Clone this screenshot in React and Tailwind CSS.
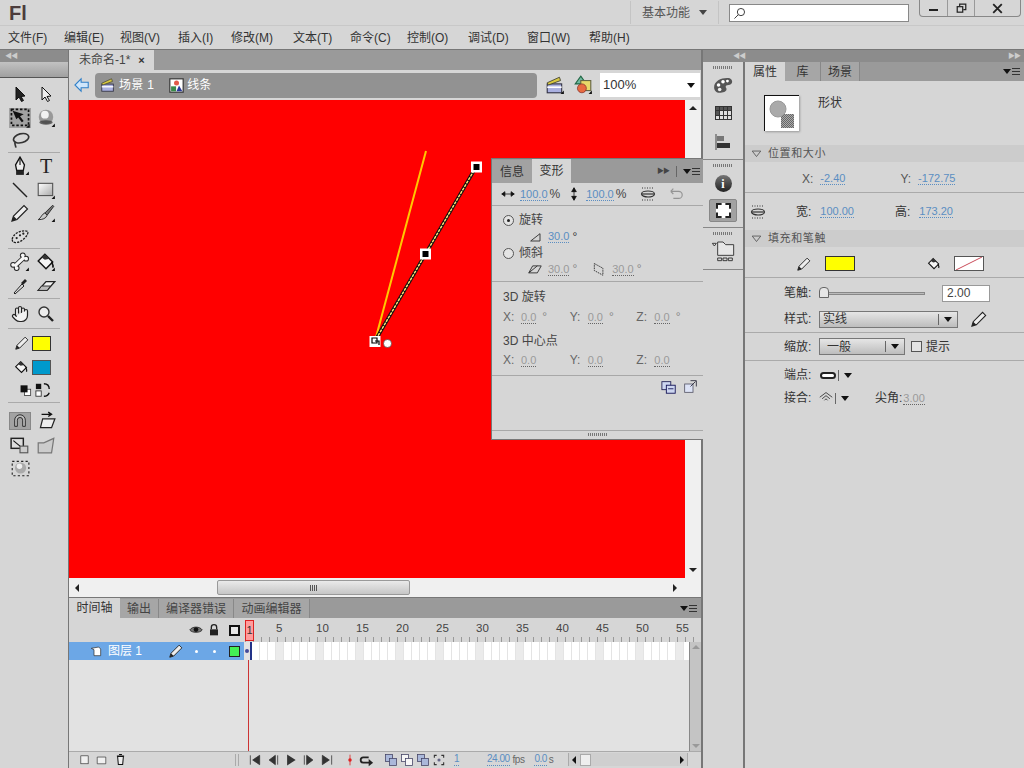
import { Hand } from "lucide-react";

const menus = [
  ["文件(F)", "w-[39px]"],
  ["编辑(E)", "w-[39px]"],
  ["视图(V)", "w-[41px]"],
  ["插入(I)", "w-[36px]"],
  ["修改(M)", "w-[45px]"],
  ["文本(T)", "w-[40px]"],
  ["命令(C)", "w-[40px]"],
  ["控制(O)", "w-[44px]"],
  ["调试(D)", "w-[42px]"],
  ["窗口(W)", "w-[45px]"],
  ["帮助(H)", "w-[42px]"],
];
const frames = Array.from({ length: 55 }, (_, i) => i + 1);
const labels = [5, 10, 15, 20, 25, 30, 35, 40, 45, 50, 55];

function Ico({ children, size = 18, className = "" }) {
  return (
    <svg viewBox="0 0 18 18" width={size} height={size} className={"shrink-0 " + className}>
      {children}
    </svg>
  );
}

function Corner() {
  return <path d="M17 14v3h-3z" fill="#111" />;
}

const Arrow = ({ white }) => (
  <Ico>
    <path d="M5 2v13l3-3 2.5 4.5 2-1L10 11.5l4-.5z" fill={white ? "#eee" : "#222"} stroke="#111" strokeWidth="1" />
  </Ico>
);
const FreeTransform = () => (
  <Ico size={22}>
    <rect x="2" y="2" width="14" height="13" fill="none" stroke="#111" strokeWidth="1.4" strokeDasharray="2 1.5" />
    <path d="M3 3l9 3-3 1.5 3 4-1.5 1-3-4L6 10z" fill="#111" />
    <Corner />
  </Ico>
);
const Ball = () => (
  <Ico size={20}>
    <circle cx="9" cy="8" r="6.5" fill="#999" />
    <circle cx="8" cy="6" r="3.5" fill="#f2f2f2" />
    <ellipse cx="9" cy="13" rx="6" ry="2" fill="#333" opacity=".7" />
    <Corner />
  </Ico>
);
const Lasso = () => (
  <Ico size={20}>
    <ellipse cx="10" cy="6.5" rx="7" ry="4" transform="rotate(-15 10 6.5)" fill="none" stroke="#333" strokeWidth="1.5" />
    <path d="M5 10c-2 2 1 3 0 5" fill="none" stroke="#333" strokeWidth="1.5" />
  </Ico>
);
const Pen = () => (
  <Ico size={20}>
    <path d="M9 1l4 7-1 5H6L5 8z" fill="#eee" stroke="#111" strokeWidth="1.2" />
    <path d="M9 2v6" stroke="#111" />
    <rect x="5.5" y="13" width="7" height="4" fill="#222" />
    <Corner />
  </Ico>
);
const LineTool = () => (
  <Ico>
    <path d="M2 2l14 14" stroke="#222" strokeWidth="1.4" />
  </Ico>
);
const RectTool = () => (
  <Ico size={20}>
    <defs>
      <linearGradient id="rectg" x1="0" y1="0" x2="1" y2="1">
        <stop offset="0" stopColor="#fff" />
        <stop offset="1" stopColor="#aaa" />
      </linearGradient>
    </defs>
    <rect x="2" y="3" width="13" height="11" fill="url(#rectg)" stroke="#555" />
    <Corner />
  </Ico>
);
const Pencil = ({ size = 18 }) => (
  <Ico size={size}>
    <path d="M1 17l1.5-5L13 1.5 16.5 5 6 15.5z" fill="#eee" stroke="#222" strokeWidth="1.2" />
    <path d="M1 17l1.5-5L6 15.5z" fill="#222" />
  </Ico>
);
const Brush = () => (
  <Ico size={20}>
    <path d="M15 2L8 9l2 2 6-8z" fill="#777" stroke="#222" strokeWidth=".8" />
    <path d="M8 9c-3 1-3 4-6 6 4 0 7-1 8-4z" fill="#ccc" stroke="#222" strokeWidth=".8" />
    <Corner />
  </Ico>
);
const Deco = () => (
  <Ico size={20}>
    <path d="M2 11c1-5 8-9 14-7 1 3-5 10-11 10-2 0-3-1-3-3z" fill="#ddd" stroke="#222" strokeWidth="1.2" strokeDasharray="2 1" />
    <circle cx="6" cy="10" r="1" fill="#222" />
    <circle cx="9" cy="7.5" r="1" fill="#222" />
    <circle cx="12" cy="6" r="1" fill="#222" />
  </Ico>
);
const Bone = () => (
  <Ico size={20}>
    <g fill="#222">
      <circle cx="11.5" cy="3" r="2.6" />
      <circle cx="14.5" cy="6" r="2.6" />
      <circle cx="2.8" cy="11.5" r="2.6" />
      <circle cx="6" cy="14.5" r="2.6" />
    </g>
    <path d="M4 13L13 4.5" stroke="#222" strokeWidth="4.4" />
    <g fill="#f6f6f6">
      <circle cx="11.5" cy="3" r="1.7" />
      <circle cx="14.5" cy="6" r="1.7" />
      <circle cx="2.8" cy="11.5" r="1.7" />
      <circle cx="6" cy="14.5" r="1.7" />
    </g>
    <path d="M4 13L13 4.5" stroke="#f6f6f6" strokeWidth="2.8" />
    <Corner />
  </Ico>
);
const Bucket = ({ size = 20, corner = true }) => (
  <Ico size={size}>
    <path d="M8 2l7 7-6 6-7-7z" fill="#f4f4f4" stroke="#111" strokeWidth="1.3" />
    <path d="M5 5l3-3 4 4-4 1z" fill="#333" />
    <path d="M14 9c1 2 2 3 1 5" fill="none" stroke="#111" strokeWidth="1.5" />
    {corner && <Corner />}
  </Ico>
);
const Dropper = () => (
  <Ico>
    <path d="M3 16l8-9 2 2-9 8z" fill="#ddd" stroke="#222" />
    <path d="M10 6l4-4 2 2-4 4z" fill="#222" />
  </Ico>
);
const Eraser = () => (
  <Ico size={20}>
    <path d="M2 13l7-8h8l-7 8z" fill="#f2f2f2" stroke="#222" strokeWidth="1.2" />
    <path d="M2 13l3-4h8l-3 4z" fill="#bbb" stroke="#222" strokeWidth=".8" />
  </Ico>
);
const Zoom = () => (
  <Ico>
    <circle cx="7" cy="7" r="5" fill="#ececec" stroke="#333" strokeWidth="1.4" />
    <path d="M11 11l5 5" stroke="#222" strokeWidth="2.4" />
  </Ico>
);
const Magnet = () => (
  <div className="w-[22px] h-[18px] bg-[#a2a2a2] border border-[#888] flex items-center justify-center">
    <Ico size={16}>
      <path d="M3 15V8a6 6 0 0112 0v7h-3V8a3 3 0 00-6 0v7z" fill="#bbb" stroke="#222" strokeWidth="1" />
    </Ico>
  </div>
);
const Rotate3d = () => (
  <Ico size={20}>
    <path d="M4 15l2-8h11l-3 8z" fill="#eee" stroke="#222" strokeWidth="1.1" />
    <path d="M5 3h9M11 1l3 2-3 2" fill="none" stroke="#111" strokeWidth="1.2" />
  </Ico>
);
const ScaleBox = () => (
  <Ico size={20}>
    <rect x="1" y="3" width="11" height="9" fill="#ddd" stroke="#222" strokeWidth="1.3" />
    <rect x="9" y="10" width="7" height="6" fill="#ccc" stroke="#555" />
    <path d="M3 5l6 5" stroke="#111" />
  </Ico>
);
const Distort = () => (
  <Ico size={20}>
    <path d="M2 7h5l9-4-2 13H2z" fill="#ccc" stroke="#777" strokeWidth="1.1" />
  </Ico>
);
const Envelope = () => (
  <Ico size={20}>
    <rect x="2" y="3" width="15" height="13" fill="none" stroke="#222" strokeDasharray="2 2" />
    <circle cx="9.5" cy="9" r="5" fill="#aaa" />
    <circle cx="8.5" cy="7.5" r="2.5" fill="#eee" />
  </Ico>
);
const BlackWhite = () => (
  <Ico size={14}>
    <rect x="7" y="8" width="8" height="8" fill="#fff" stroke="#333" />
    <rect x="2" y="3" width="9" height="9" fill="#111" />
  </Ico>
);
const Swap = () => (
  <Ico size={16}>
    <rect x="1" y="2" width="6" height="6" fill="#111" />
    <rect x="1" y="10" width="6" height="6" fill="#fff" stroke="#333" />
    <path d="M10 2c4 0 6 2 6 6M10 16c3 0 5-1 6-4" fill="none" stroke="#111" strokeWidth="1.5" />
  </Ico>
);
const LinkIcon = () => (
  <Ico>
    <ellipse cx="9" cy="9" rx="6.5" ry="3" fill="none" stroke="#333" strokeWidth="1.2" />
    <path d="M3 9h12" stroke="#333" strokeWidth="1.2" />
    <path d="M3 3h12M3 15h12" stroke="#333" strokeDasharray="1 1.5" />
  </Ico>
);
const Clapper = ({ size = 20, corner }) => (
  <Ico size={size}>
    <rect x="2" y="8" width="13" height="8" fill="#aab0e0" stroke="#334" />
    <path d="M2 11h13" stroke="#fff" strokeWidth="1.5" />
    <path d="M2 7l11-5 1 3L3 9z" fill="#d8c840" stroke="#443" strokeWidth=".8" />
    {corner && <Corner />}
  </Ico>
);
const Symbols = () => (
  <Ico size={20}>
    <path d="M7 1l5 7H2z" fill="#6fb9a0" stroke="#264" />
    <rect x="7" y="5" width="9" height="9" fill="#e8d868" stroke="#664" />
    <circle cx="8" cy="12" r="4" fill="#e86a40" stroke="#722" strokeWidth=".6" />
    <Corner />
  </Ico>
);
const ShapeBadge = () => (
  <Ico size={15}>
    <rect x="1" y="1" width="16" height="16" fill="#fff" stroke="#333" strokeWidth="1.4" />
    <circle cx="9" cy="6" r="3" fill="#e25a4a" />
    <rect x="2.5" y="10" width="6" height="6" fill="#3b8a4a" />
    <path d="M12 9l4 7H9z" fill="#2a3a9a" />
  </Ico>
);
const BackArrow = () => (
  <Ico size={16}>
    <path d="M8 2v4h8v6H8v4L1 9z" fill="#cfe6fb" stroke="#2f7fc8" strokeWidth="1.2" />
  </Ico>
);

function Caret({ className = "" }) {
  return <span className={"inline-block w-0 h-0 border-l-[4px] border-r-[4px] border-t-[5px] border-l-transparent border-r-transparent border-t-[#111] " + className} />;
}

function Grip({ className = "" }) {
  return <div className={"w-[20px] h-[3px] bg-[repeating-linear-gradient(90deg,#777_0,#777_1px,transparent_1px,transparent_2px)] " + className} />;
}

function ToolRow({ children }) {
  return <div className="grid grid-cols-[26px_26px] -ml-[1px] auto-rows-[23.7px] items-center justify-items-center">{children}</div>;
}

function Tools() {
  return (
    <div className="flex-1 flex flex-col bg-[#d6d6d6]">
      <div className="h-[75px] pt-[4px] border-b border-[#aaa] mx-[8px]">
        <ToolRow>
          <Arrow />
          <Arrow white />
          <div className="bg-[#a2a2a2] w-[22px] h-[20px] flex items-center justify-center"><FreeTransform /></div>
          <Ball />
          <Lasso />
        </ToolRow>
      </div>
      <div className="h-[96px] pt-[1px] border-b border-[#aaa] mx-[8px]">
        <ToolRow>
          <Pen />
          <span className="text-[20px] leading-none text-[#222] [font-family:'Liberation_Serif',serif]">T</span>
          <LineTool />
          <RectTool />
          <Pencil />
          <Brush />
          <Deco />
        </ToolRow>
      </div>
      <div className="h-[50px] pt-[1px] border-b border-[#aaa] mx-[8px]">
        <ToolRow>
          <Bone />
          <Bucket />
          <Dropper />
          <Eraser />
        </ToolRow>
      </div>
      <div className="h-[30px] pt-[3px] border-b border-[#aaa] mx-[8px]">
        <ToolRow>
          <Hand size={18} fill="#f2f2f2" color="#222" strokeWidth={1.6} />
          <Zoom />
        </ToolRow>
      </div>
      <div className="h-[74px] pt-[2px] border-b border-[#aaa] mx-[8px]">
        <div className="flex items-center h-[24px] pl-[7px] gap-[3px]">
          <Pencil size={14} />
          <div className="w-[19px] h-[15px] bg-[#ffff00] border border-[#333]" />
        </div>
        <div className="flex items-center h-[24px] pl-[6px] gap-[3px]">
          <Bucket size={15} corner={false} />
          <div className="w-[19px] h-[15px] bg-[#0099cc] border border-[#555]" />
        </div>
        <div className="flex items-center h-[22px] pl-[11px] gap-[2px]">
          <BlackWhite />
          <Swap />
        </div>
      </div>
      <div className="pt-[6px] mx-[8px]">
        <ToolRow>
          <Magnet />
          <Rotate3d />
          <ScaleBox />
          <Distort />
          <Envelope />
        </ToolRow>
      </div>
    </div>
  );
}

function Val({ children, blue, className = "" }) {
  return (
    <span className={"text-[11px] border-b border-dotted leading-[12px] " + (blue ? "text-[#5b8ec2] border-[#5b8ec2] " : "text-[#9a9a9a] border-[#666] ") + className}>
      {children}
    </span>
  );
}

function Radio({ on }) {
  return (
    <span className="w-[11px] h-[11px] rounded-full border border-[#555] bg-[#e4e4e4] flex items-center justify-center shrink-0">
      {on && <span className="w-[3px] h-[3px] rounded-full bg-[#222]" />}
    </span>
  );
}

function Xyz({ suffix }) {
  return (
    <div className="flex text-[#666] h-[14px] items-center">
      {["X:", "Y:", "Z:"].map((a) => (
        <div key={a} className="w-[67px] flex gap-[6px] items-center">
          <span className="w-[12px]">{a}</span>
          <Val>0.0</Val>
          <span className="text-[#888]">{suffix}</span>
        </div>
      ))}
    </div>
  );
}

function TransformPanel() {
  return (
    <div className="absolute left-[422px] top-[108px] w-[212px] h-[282px] bg-[#d6d6d6] border border-[#777] border-r-0 flex flex-col text-[12px] text-[#444]">
      <div className="h-[24px] bg-[#9a9a9a] flex items-end">
        <div className="w-[40px] h-[23px] flex items-center justify-center bg-[#a2a2a2] text-[#333]">信息</div>
        <div className="w-[39px] h-[24px] flex items-center justify-center bg-[#d6d6d6] text-[#333]">变形</div>
        <div className="flex-1 h-[24px] flex items-center justify-end gap-[6px] pr-[3px] text-[#333]">
          <span className="text-[7px] tracking-[-1px] text-[#444] mr-[1px]">▶▶</span>
          <span className="w-px h-[11px] bg-[#666]" />
          <MenuGlyph />
        </div>
      </div>
      <div className="h-[23px] flex items-center border-b border-[#a8a8a8] pl-[9px]">
        <Ico size={14}><path d="M1 9h16M1 9l4-3v6zM17 9l-4-3v6z" stroke="#111" fill="#111" /></Ico>
        <Val blue className="ml-[5px]">100.0</Val>
        <span className="ml-[2px]">%</span>
        <Ico size={14} className="ml-[7px]"><path d="M9 1v16M9 1L6 6h6zM9 17l-3-5h6z" stroke="#111" fill="#111" /></Ico>
        <Val blue className="ml-[5px]">100.0</Val>
        <span className="ml-[2px]">%</span>
        <span className="ml-[13px]"><LinkIcon /></span>
        <Ico size={16} className="ml-[11px] opacity-50"><path d="M3 6h9a3 3 0 010 8H6M3 6l3-3M3 6l3 3" fill="none" stroke="#555" strokeWidth="1.3" /></Ico>
      </div>
      <div className="h-[76px] border-b border-[#a8a8a8] pl-[11px] pt-[6px]">
        <div className="flex items-center gap-[5px] h-[16px]"><Radio on /><span>旋转</span></div>
        <div className="flex items-center h-[17px] pl-[27px] gap-[6px]">
          <Ico size={12}><path d="M1 15L15 4v11z" fill="none" stroke="#333" strokeWidth="1.4" /></Ico>
          <Val blue>30.0</Val><span className="-ml-[3px] text-[#333]">°</span>
        </div>
        <div className="flex items-center gap-[5px] h-[16px]"><Radio /><span>倾斜</span></div>
        <div className="flex items-center h-[16px] pl-[25px] gap-[6px] text-[#888]">
          <Ico size={14}><path d="M1 14l5-9h11l-5 9zM1 14l11-9" fill="none" stroke="#333" strokeWidth="1.2" /></Ico>
          <Val>30.0</Val><span className="-ml-[3px]">°</span>
          <Ico size={14} className="ml-[9px]"><path d="M3 2l11 6v9L3 11z" fill="none" stroke="#333" strokeWidth="1.2" strokeDasharray="2 1" /></Ico>
          <Val>30.0</Val><span className="-ml-[3px]">°</span>
        </div>
      </div>
      <div className="h-[94px] border-b border-[#a8a8a8] pl-[11px] pt-[7px]">
        <div className="h-[16px] flex items-center">3D 旋转</div>
        <div className="mt-[5px]"><Xyz suffix="°" /></div>
        <div className="mt-[9px] h-[16px] flex items-center">3D 中心点</div>
        <div className="mt-[4px]"><Xyz suffix="" /></div>
      </div>
      <div className="flex-1 flex flex-col">
        <div className="flex justify-end gap-[6px] pr-[5px] pt-[3px]">
          <Ico size={16}><rect x="1" y="3" width="10" height="9" fill="#cdd6f0" stroke="#225" /><rect x="6" y="7" width="10" height="9" fill="#cdd6f0" stroke="#115" /><path d="M8 11h6" stroke="#115" /></Ico>
          <Ico size={15}><rect x="2" y="6" width="10" height="10" fill="#dde3f6" stroke="#556" /><path d="M9 2h7v7M15 3l-6 6" fill="none" stroke="#223" /></Ico>
        </div>
        <div className="mt-auto h-[8px] mb-[1px] border-t border-[#a8a8a8] flex justify-center items-center">
          <Grip />
        </div>
      </div>
    </div>
  );
}

function MenuGlyph() {
  return (
    <span className="flex items-center gap-[1px]">
      <Caret className="border-l-[3px] border-r-[3px] border-t-[3px]" />
      <span className="w-[8px] h-[7px] bg-[repeating-linear-gradient(180deg,#333_0,#333_1px,transparent_1px,transparent_3px)]" />
    </span>
  );
}

function Canvas() {
  return (
    <div className="w-[616px] h-[478px] bg-[#ff0000]">
      <svg viewBox="0 0 616 478" className="w-full h-full block">
        <path d="M357 51L306 241" stroke="#ffc800" strokeWidth="2" />
        <path d="M407 67L306 241" stroke="#111" strokeWidth="3.5" />
        <path d="M407 67L306 241" stroke="#ffe97a" strokeWidth="1.4" strokeDasharray="3 1" />
        <rect x="402" y="61.5" width="11" height="11" fill="#fff" />
        <rect x="404.5" y="64" width="6" height="6" fill="#000" />
        <rect x="351" y="148.5" width="11" height="11" fill="#fff" />
        <rect x="353.5" y="151" width="6" height="6" fill="#000" />
        <rect x="300.5" y="236" width="11" height="11" fill="#fff" />
        <path d="M303 238h5v5h-5zM306 241h4v4" fill="none" stroke="#000" strokeWidth="1.2" />
        <circle cx="318.5" cy="243.5" r="4" fill="#fff" stroke="#333" strokeWidth=".6" />
      </svg>
    </div>
  );
}

function Timeline() {
  return (
    <div className="h-[170px] flex flex-col border-t border-[#777] text-[12px]">
      <div className="h-[20px] bg-[#9a9a9a] flex items-end text-[#444]">
        <div className="w-[51px] h-[20px] bg-[#d6d6d6] flex items-center justify-center text-[#333]">时间轴</div>
        <div className="w-[39px] h-[19px] bg-[#a6a6a6] border-r border-[#888] flex items-center justify-center">输出</div>
        <div className="w-[75px] h-[19px] bg-[#a6a6a6] border-r border-[#888] flex items-center justify-center">编译器错误</div>
        <div className="w-[76px] h-[19px] bg-[#a6a6a6] border-r border-[#888] flex items-center justify-center">动画编辑器</div>
        <div className="ml-auto h-[19px] pr-[4px] flex items-center"><MenuGlyph /></div>
      </div>
      <div className="h-[24px] flex bg-[#d6d6d6]">
        <div className="w-[176px] shrink-0 flex items-center justify-end pr-[5px]">
          <Ico size={14}><path d="M1 9c3-5 13-5 16 0-3 4-13 4-16 0z" fill="#777" stroke="#222" /><circle cx="9" cy="8.5" r="3" fill="#111" /></Ico>
          <Ico size={12} className="ml-[5px]"><path d="M5 8V5a4 4 0 018 0v3" fill="none" stroke="#222" strokeWidth="2" /><rect x="3" y="8" width="12" height="9" fill="#222" /></Ico>
          <span className="ml-[9px] w-[11px] h-[11px] border-2 border-[#111] bg-[#e8e8e8]" />
        </div>
        <div className="flex-1 min-w-0 overflow-hidden flex flex-col justify-end relative">
          <div className="absolute left-0 top-[2px] w-[9px] h-[21px] bg-[#ff9c9c] border border-[#dd2222] flex items-center justify-center text-[11px] leading-none text-[#333]">1</div>
          <div className="flex h-[16px] pl-[31px] text-[#444] text-[11.5px] leading-[14px]">
            {labels.map((n) => (
              <span key={n} className="w-[40px] shrink-0">{n}</span>
            ))}
          </div>
          <div className="h-[5px] bg-[repeating-linear-gradient(90deg,#999_0,#999_1px,transparent_1px,transparent_8px)]" />
        </div>
      </div>
      <div className="h-[18px] flex bg-[#e2e2e2]">
        <div className="w-[175px] shrink-0 bg-[#6ca7e6] flex items-center pl-[21px] text-white">
          <Ico size={12}><path d="M2 5l11-2 3 3v10H6V7z" fill="#fff" stroke="#222" /></Ico>
          <span className="ml-[6px] w-[61px]">图层 1</span>
          <Pencil size={14} />
          <span className="ml-[12px] w-[3px] h-[3px] rounded-full bg-white" />
          <span className="ml-[15px] w-[3px] h-[3px] rounded-full bg-white" />
          <span className="ml-[13px] w-[11px] h-[11px] bg-[#44f055] border border-[#222]" />
        </div>
        <div className="w-[8px] shrink-0 bg-[#e2e2e2] border-r-2 border-[#223388] flex items-center justify-center">
          <span className="w-[4px] h-[4px] rounded-full bg-[#444a99]" />
        </div>
        <div className="flex-1 min-w-0 flex overflow-hidden">
          {frames.map((f) => (
            <div key={f} className={"w-[8px] h-full shrink-0 border-r border-[#e4e4e4] " + (f % 5 === 4 ? "bg-[#ebebeb]" : "bg-white")} />
          ))}
        </div>
        <div className="w-[12px] shrink-0 bg-[#c4c4c4] border-l border-[#888] flex justify-center pt-[3px]">
          <span className="w-0 h-0 border-x-[4px] border-b-[4px] border-x-transparent border-b-[#999]" />
        </div>
      </div>
      <div className="flex-1 flex bg-[#e2e2e2]">
        <div className="w-[175px] shrink-0" />
        <div className="w-px bg-[#cc3333] ml-[4px]" />
        <div className="flex-1" />
        <div className="w-[12px] shrink-0 bg-[#c4c4c4] border-l border-[#888] flex justify-center items-end pb-[3px]">
          <span className="w-0 h-0 border-x-[4px] border-t-[4px] border-x-transparent border-t-[#999]" />
        </div>
      </div>
      <div className="h-[16px] bg-[#d6d6d6] flex items-center text-[#666] text-[10px] tracking-[-0.5px] border-t border-[#aaa]">
        <div className="w-[38px] pl-[10px] flex gap-[6px] shrink-0">
          <Ico size={11}><rect x="3" y="3" width="12" height="13" fill="#f0f0f0" stroke="#222" /></Ico>
          <Ico size={11}><path d="M2 5h14v11H2z" fill="#f0f0f0" stroke="#222" /></Ico>
        </div>
        <Ico size={13} className="ml-[7px]"><path d="M5 5h8l-1 11H6zM4 4h10M7 2h4" fill="#eee" stroke="#111" strokeWidth="1.4" /></Ico>
        <span className="ml-[108px] w-[4px] h-[12px] border-x border-[#aaa]" />
        <div className="ml-[9px] flex items-center text-[#333] gap-[4px]">
          <Ico size={14}><path d="M3 3v12M15 3L6 9l9 6z" fill="#333" stroke="#333" /></Ico>
          <Ico size={14}><path d="M12 3L4 9l8 6zM15 3v12" fill="#333" stroke="#333" /></Ico>
          <Ico size={14}><path d="M4 2l11 7-11 7z" fill="#333" /></Ico>
          <Ico size={14}><path d="M6 3l8 6-8 6zM3 3v12" fill="#333" stroke="#333" /></Ico>
          <Ico size={14}><path d="M3 3l9 6-9 6zM15 3v12" fill="#333" stroke="#333" /></Ico>
        </div>
        <Ico size={12} className="ml-[10px]"><path d="M9 1v16" stroke="#d22" strokeWidth="1.2" /><circle cx="9" cy="9" r="2.6" fill="#d22" /></Ico>
        <Ico size={16} className="ml-[2px]"><path d="M12 6H6a3 3 0 000 6h8" fill="none" stroke="#222" strokeWidth="2" /><path d="M12 8l5 4-5 4z" fill="#222" /></Ico>
        <div className="ml-[10px] flex gap-[2px]">
          {[0, 1, 2].map((i) => (
            <Ico key={i} size={14}><rect x="2" y="2" width="9" height="9" fill={i === 1 ? "#f6f6f6" : "#aab8da"} stroke="#446" /><rect x="7" y="7" width="9" height="9" fill={i === 1 ? "#f6f6f6" : "#aab8da"} stroke="#446" /></Ico>
          ))}
          <Ico size={14}><path d="M3 6V3h3M12 3h3v3M15 12v3h-3M6 15H3v-3" fill="none" stroke="#333" strokeWidth="1.4" /><circle cx="9" cy="9" r="2" fill="#668" /></Ico>
        </div>
        <span className="ml-[8px] text-[#5b8ec2] border-b border-dotted border-[#5b8ec2] leading-[12px]">1</span>
        <span className="ml-[28px] text-[#5b8ec2] border-b border-dotted border-[#5b8ec2] leading-[12px]">24.00</span>
        <span className="ml-[3px]">fps</span>
        <span className="ml-[10px] text-[#5b8ec2] border-b border-dotted border-[#5b8ec2] leading-[12px]">0.0</span>
        <span className="ml-[2px]">s</span>
        <div className="ml-auto mr-[13px] w-[120px] h-[13px] bg-[#cfcfcf] flex items-center justify-between px-[3px] border-x border-[#aaa]">
          <span className="flex items-center gap-[4px]">
            <span className="w-0 h-0 border-y-[4px] border-r-[4px] border-y-transparent border-r-[#111]" />
            <span className="w-[11px] h-[12px] bg-[#eee] border border-[#aaa]" />
          </span>
          <span className="w-0 h-0 border-y-[4px] border-l-[4px] border-y-transparent border-l-[#111]" />
        </div>
      </div>
    </div>
  );
}

function Center() {
  return (
    <div className="w-[635px] shrink-0 flex flex-col relative border-l border-r-2 border-[#777] bg-[#d6d6d6]">
      <div className="h-[20px] bg-[#9a9a9a] flex">
        <div className="w-[85px] bg-[#d6d6d6] flex items-center pl-[10px] text-[12px] text-[#444]">
          未命名-1*<span className="ml-[8px] text-[#333] text-[11px] font-bold">×</span>
        </div>
      </div>
      <div className="h-[30px] flex items-center bg-[#d6d6d6] text-[12px]">
        <div className="w-[26px] flex justify-center"><BackArrow /></div>
        <div className="w-[442px] h-[25px] bg-[#929292] rounded-[4px] flex items-center pl-[5px] text-white">
          <Clapper size={16} />
          <span className="ml-[3px] tracking-[0.3px]">场景 1</span>
          <span className="ml-[15px]"><ShapeBadge /></span>
          <span className="ml-[3px]">线条</span>
        </div>
        <span className="ml-[8px]"><Clapper corner /></span>
        <span className="ml-[8px]"><Symbols /></span>
        <div className="ml-[7px] w-[100px] h-[24px] bg-white flex items-center justify-between pl-[3px] pr-[5px] text-[#333] text-[13px]">
          100%<Caret />
        </div>
      </div>
      <div className="flex h-[478px]">
        <Canvas />
        <div className="w-[16px] bg-[#f0f0f0] flex flex-col items-center justify-between py-[6px]">
          <span className="w-0 h-0 border-x-[4px] border-b-[4px] border-x-transparent border-b-[#222]" />
          <span className="w-0 h-0 border-x-[4px] border-t-[4px] border-x-transparent border-t-[#222]" />
        </div>
      </div>
      <div className="h-[19px] bg-[#f0f0f0] flex items-center pl-[6px] pr-[24px]">
        <span className="w-0 h-0 border-y-[4px] border-r-[4px] border-y-transparent border-r-[#222]" />
        <div className="w-[193px] h-[15px] ml-[138px] bg-gradient-to-b from-[#eaeaea] to-[#c6c6c6] border border-[#999] rounded-[2px] flex items-center justify-center">
          <span className="w-[7px] h-[6px] bg-[repeating-linear-gradient(90deg,#555_0,#555_1px,transparent_1px,transparent_2px)]" />
        </div>
        <span className="ml-auto w-0 h-0 border-y-[4px] border-l-[4px] border-y-transparent border-l-[#222]" />
      </div>
      <Timeline />
      <TransformPanel />
    </div>
  );
}

function Strip() {
  return (
    <div className="w-[40px] shrink-0 bg-[#d6d6d6] flex flex-col">
      <div className="h-[98px] flex flex-col items-center border-b border-[#888] pt-[4px]">
        <Grip />
        <div className="h-[26px] mt-[3px] flex items-center">
          <Ico size={20}><path d="M1 11c0-6 8-9 14-8 4 2 2 6-1 6-3 0-3 2-2 3 1 3-3 4-6 4-3 0-5-2-5-5z" fill="#555" /><circle cx="5" cy="9" r="1.6" fill="#fff" /><circle cx="9" cy="6" r="1.6" fill="#fff" /><circle cx="13" cy="5.5" r="1.3" fill="#fff" /><circle cx="6" cy="13" r="1.6" fill="#eee" /></Ico>
        </div>
        <div className="h-[30px] flex items-center">
          <span className="w-[17px] h-[14px] grid grid-cols-4 gap-px bg-[#333] border border-[#333]">
            {Array.from({ length: 12 }, (_, i) => <span key={i} className={i < 5 ? "bg-[#555]" : "bg-[#ddd]"} />)}
          </span>
        </div>
        <div className="h-[28px] flex items-center">
          <Ico size={18}><path d="M2 1v16" stroke="#444" /><rect x="3" y="3" width="7" height="5" fill="#777" /><rect x="3" y="10" width="13" height="5" fill="#333" /></Ico>
        </div>
      </div>
      <div className="h-[68px] flex flex-col items-center border-b border-[#888] pt-[4px]">
        <Grip />
        <div className="h-[23px] mt-[5px] flex items-center">
          <span className="w-[17px] h-[17px] rounded-full bg-gradient-to-b from-[#777] to-[#222] text-white text-[12px] leading-none font-bold flex items-center justify-center [font-family:'Liberation_Serif',serif]">i</span>
        </div>
        <div className="mt-[4px] w-[28px] h-[23px] bg-[#a2a2a2] border border-[#888] rounded-[2px] flex items-center justify-center">
          <span className="w-[15px] h-[15px] bg-white border-2 border-dashed border-[#222]" />
        </div>
      </div>
      <div className="h-[42px] flex flex-col items-center border-b border-[#888] pt-[4px]">
        <Grip />
        <Ico size={24} className="mt-[3px]"><path d="M1 4l3 0-1.5 2zM5 3h4l2 2h6v8H5z" fill="#e6e6e6" stroke="#333" strokeWidth=".7" /><path d="M5 15h3v2H5zM9 15h3v2H9zM13 15h3v2h-3z" fill="none" stroke="#333" strokeWidth=".7" /></Ico>
      </div>
      <div className="flex-1 bg-[#d6d6d6]" />
    </div>
  );
}

function Section({ children }) {
  return (
    <div className="h-[17px] bg-[#cccccc] flex items-center pl-[6px] gap-[6px] text-[11px] text-[#555] tracking-[0.6px]">
      <Ico size={11}><path d="M2 5h14l-7 9z" fill="none" stroke="#555" strokeWidth="1.4" /></Ico>
      {children}
    </div>
  );
}

function Select({ width, label, pad }) {
  return (
    <div className={width + " h-[17px] bg-gradient-to-b from-[#e6e6e6] to-[#bdbdbd] border border-[#777] flex items-center justify-between pr-[5px] text-[#333] " + pad}>
      {label}
      <span className="flex items-center gap-[5px]">
        <span className="w-px h-[11px] bg-[#666]" />
        <Caret />
      </span>
    </div>
  );
}

function Props() {
  return (
    <div className="flex-1 bg-[#d6d6d6] border-l-2 border-[#777] flex flex-col text-[12px] text-[#444]">
      <div className="h-[19px] bg-[#9a9a9a] flex text-[#333]">
        <div className="w-[40px] bg-[#d6d6d6] flex items-center justify-center">属性</div>
        <div className="w-[36px] bg-[#a6a6a6] border-r border-[#888] flex items-center justify-center">库</div>
        <div className="w-[39px] bg-[#a6a6a6] border-r border-[#888] flex items-center justify-center">场景</div>
        <div className="ml-auto pr-[4px] flex items-center"><MenuGlyph /></div>
      </div>
      <div className="h-[64px] flex pl-[19px] pt-[14px]">
        <div className="w-[35px] h-[36px] bg-white border-t border-l border-[#111] shadow-[1px_1px_2px_#999] flex items-center justify-center">
          <svg viewBox="0 0 26 30" width="26" height="30">
            <defs>
              <pattern id="chk" width="2" height="2" patternUnits="userSpaceOnUse">
                <rect width="2" height="2" fill="#aaa" />
                <rect width="1" height="1" fill="#666" />
                <rect x="1" y="1" width="1" height="1" fill="#666" />
              </pattern>
            </defs>
            <rect x="12" y="15" width="13" height="14" fill="url(#chk)" />
            <circle cx="9" cy="10" r="8" fill="#aaa" stroke="#999" />
          </svg>
        </div>
        <span className="ml-[19px] mt-[-1px] text-[#333]">形状</span>
      </div>
      <Section>位置和大小</Section>
      <div className="h-[31px] border-b border-[#aaa] flex items-center pt-[3px]">
        <span className="ml-[57px] text-[#555]">X:</span>
        <Val blue className="ml-[7px]">-2.40</Val>
        <span className="ml-[55px] text-[#555]">Y:</span>
        <Val blue className="ml-[7px]">-172.75</Val>
      </div>
      <div className="h-[37px] flex items-center">
        <span className="ml-[4px]"><LinkIcon /></span>
        <span className="ml-[29px] text-[#333]">宽:</span>
        <Val blue className="ml-[9px]">100.00</Val>
        <span className="ml-[41px] text-[#333]">高:</span>
        <Val blue className="ml-[9px]">173.20</Val>
      </div>
      <Section>填充和笔触</Section>
      <div className="h-[31px] border-b border-[#aaa] flex items-center pt-[3px]">
        <span className="ml-[52px]"><Pencil size={14} /></span>
        <span className="ml-[14px] w-[30px] h-[15px] bg-[#ffff00] border border-[#333]" />
        <span className="ml-[72px]"><Bucket size={14} corner={false} /></span>
        <span className="ml-[13px] w-[30px] h-[15px] border border-[#555] bg-white">
          <svg viewBox="0 0 30 15" className="w-full h-full block"><path d="M0 15L30 0" stroke="#c03040" strokeWidth="1" /></svg>
        </span>
      </div>
      <div className="h-[28px] flex items-center pt-[2px]">
        <span className="ml-[39px] w-[35px] text-[#333]">笔触:</span>
        <div className="w-[106px] flex items-center relative h-[12px]">
          <div className="w-full ml-[6px] h-[3px] bg-[#bbb] border border-[#888]" />
          <span className="absolute left-0 top-0 w-[10px] h-[11px] bg-[#e6e6e6] border border-[#666] rounded-t-[4px]" />
        </div>
        <span className="ml-[17px] w-[48px] h-[17px] bg-white border border-[#999] flex items-center pl-[4px] text-[#444]">2.00</span>
      </div>
      <div className="h-[27px] border-b border-[#aaa] flex items-center">
        <span className="ml-[39px] w-[35px] text-[#333]">样式:</span>
        <Select width="w-[139px]" label="实线" pad="pl-[3px]" />
        <span className="ml-[13px]"><Pencil size={16} /></span>
      </div>
      <div className="h-[28px] border-b border-[#aaa] flex items-center">
        <span className="ml-[39px] w-[35px] text-[#333]">缩放:</span>
        <Select width="w-[86px]" label="一般" pad="pl-[7px]" />
        <span className="ml-[6px] w-[11px] h-[11px] bg-[#e4e4e4] border border-[#555]" />
        <span className="ml-[4px] text-[#333]">提示</span>
      </div>
      <div className="h-[26px] flex items-center pt-[2px]">
        <span className="ml-[39px] w-[35px] text-[#333]">端点:</span>
        <span className="ml-[1px] w-[16px] h-[7px] rounded-full border-2 border-[#222] bg-white" />
        <span className="ml-[2px] w-px h-[11px] bg-[#666]" />
        <Caret className="ml-[5px]" />
      </div>
      <div className="h-[22px] flex items-center">
        <span className="ml-[39px] w-[35px] text-[#333]">接合:</span>
        <Ico size={14}><path d="M1 8l8-6 8 6M4 10l5-4 5 4M7 12l2-2 2 2" fill="none" stroke="#333" strokeWidth="1.1" /></Ico>
        <span className="ml-[2px] w-px h-[11px] bg-[#666]" />
        <Caret className="ml-[5px]" />
        <span className="ml-[26px] text-[#333]">尖角:</span>
        <Val className="ml-[1px]">3.00</Val>
      </div>
      <div className="flex-1" />
    </div>
  );
}

export default function App() {
  return (
    <div className="w-[1024px] h-[768px] overflow-hidden bg-[#d6d6d6] flex flex-col [font-family:'Liberation_Sans','Noto_Sans_CJK_SC',sans-serif]">
      <div className="h-[26px] flex items-start border-b border-[#c8c8c8] shrink-0">
        <span className="ml-[9px] mt-[1px] w-[18px] text-[20px] leading-[24px] font-bold text-[#4c3c3c]">Fl</span>
        <div className="ml-[603px] mt-[1px] h-[23px] w-[89px] border-x border-[#c4c4c4] flex items-center pl-[11px] text-[12px] text-[#555]">
          基本功能
          <Caret className="ml-[9px] border-l-[3px] border-r-[3px] border-t-[3px] border-t-[#444]" />
        </div>
        <div className="ml-[10px] mt-[4px] w-[180px] h-[18px] bg-white border border-[#888] flex items-center pl-[3px]">
          <Ico size={13}><circle cx="11" cy="7" r="5" fill="none" stroke="#222" strokeWidth="1.2" /><path d="M7 11l-5 5" stroke="#222" strokeWidth="1.2" /></Ico>
        </div>
        <div className="ml-[10px] w-[102px] h-[17px] border border-t-0 border-[#888] rounded-b-[4px] flex items-center text-[#222]">
          <div className="w-[28px] h-full border-r border-[#999] flex items-center justify-center">
            <span className="w-[9px] h-[2px] mt-[3px] bg-[#222]" />
          </div>
          <div className="w-[27px] h-full border-r border-[#999] flex items-center justify-center">
            <Ico size={11}><rect x="2" y="6" width="9" height="9" fill="none" stroke="#222" strokeWidth="2" /><path d="M6 5V2h10v9h-4" fill="none" stroke="#222" strokeWidth="2" /></Ico>
          </div>
          <div className="flex-1 flex items-center justify-center">
            <Ico size={11}><path d="M2 2l14 14M16 2L2 16" stroke="#222" strokeWidth="3" /></Ico>
          </div>
        </div>
      </div>
      <div className="h-[24px] shrink-0 flex items-center gap-[17px] pl-[8px] text-[12px] text-[#333] border-b border-[#777]">
        {menus.map(([label, w]) => (
          <span key={label} className={w + " whitespace-nowrap"}>{label}</span>
        ))}
      </div>
      <div className="flex-1 flex min-h-0">
        <div className="w-[68px] shrink-0 flex flex-col">
          <div className="h-[12px] bg-[#8c8c8c] flex items-center pl-[5px] text-[7px] tracking-[-1px] text-[#ccc]">◀◀</div>
          <div className="h-[16px] bg-gradient-to-b from-[#c2c2c2] to-[#a0a0a0] border-b border-[#555]" />
          <Tools />
        </div>
        <Center />
        <div className="w-[321px] shrink-0 flex flex-col">
          <div className="h-[12px] bg-[#8c8c8c] flex items-center justify-between pl-[30px] pr-[4px] text-[7px] tracking-[-1px] text-[#ccc]">
            <span>◀◀</span>
            <span>▶▶</span>
          </div>
          <div className="flex-1 flex min-h-0">
            <Strip />
            <Props />
          </div>
        </div>
      </div>
    </div>
  );
}
